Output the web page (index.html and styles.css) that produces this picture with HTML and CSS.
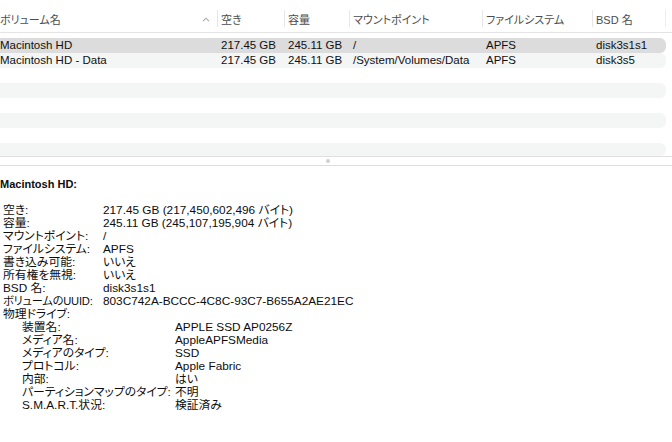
FILE: index.html
```html
<!DOCTYPE html>
<html lang="ja">
<head>
    <meta charset="UTF-8">
    <meta name="viewport" content="width=device-width, initial-scale=1.0">
    <title>ボリューム</title>
    <link rel="stylesheet" href="styles.css">
</head>
<body>
    <div class="volumes">
        <div class="thead">
            <div class="th first">ボリューム名
                <svg class="sort" width="8" height="5" viewBox="0 0 8 5"><path d="M1 4.2 L4 1.2 L7 4.2" fill="none" stroke="#a8a8a8" stroke-width="1.1"/></svg>
            </div>
            <div class="th">空き</div>
            <div class="th">容量</div>
            <div class="th">マウントポイント</div>
            <div class="th">ファイルシステム</div>
            <div class="th last">BSD 名</div>
        </div>
        <div class="tbody">
            <div class="row selected">
                <div class="td first">Macintosh HD</div>
                <div class="td">217.45 GB</div>
                <div class="td">245.11 GB</div>
                <div class="td">/</div>
                <div class="td">APFS</div>
                <div class="td">disk3s1s1</div>
            </div>
            <div class="row stripe">
                <div class="td first">Macintosh HD - Data</div>
                <div class="td">217.45 GB</div>
                <div class="td">245.11 GB</div>
                <div class="td">/System/Volumes/Data</div>
                <div class="td">APFS</div>
                <div class="td">disk3s5</div>
            </div>
            <div class="row"></div>
            <div class="row stripe"></div>
            <div class="row"></div>
            <div class="row stripe"></div>
            <div class="row"></div>
            <div class="row stripe short"></div>
        </div>
    </div>

    <div class="splitter"><span class="handle"></span></div>

    <div class="details">
        <div class="title">Macintosh HD:</div>
        <dl class="props">
            <dt>空き:</dt><dd>217.45 GB (217,450,602,496 バイト)</dd>
            <dt>容量:</dt><dd>245.11 GB (245,107,195,904 バイト)</dd>
            <dt>マウントポイント:</dt><dd>/</dd>
            <dt>ファイルシステム:</dt><dd>APFS</dd>
            <dt>書き込み可能:</dt><dd>いいえ</dd>
            <dt>所有権を無視:</dt><dd>いいえ</dd>
            <dt>BSD 名:</dt><dd>disk3s1s1</dd>
            <dt class="tight">ボリュームのUUID:</dt><dd>803C742A-BCCC-4C8C-93C7-B655A2AE21EC</dd>
        </dl>
        <div class="group">物理ドライブ:</div>
        <dl class="props nested">
            <dt>装置名:</dt><dd>APPLE SSD AP0256Z</dd>
            <dt>メディア名:</dt><dd>AppleAPFSMedia</dd>
            <dt>メディアのタイプ:</dt><dd>SSD</dd>
            <dt>プロトコル:</dt><dd>Apple Fabric</dd>
            <dt>内部:</dt><dd>はい</dd>
            <dt>パーティションマップのタイプ:</dt><dd>不明</dd>
            <dt>S.M.A.R.T.状況:</dt><dd>検証済み</dd>
        </dl>
    </div>
</body>
</html>
```

FILE: styles.css
```css
body {
    margin: 0;
    background: #ffffff;
    color: #111111;
    font-family: "Liberation Sans", "Noto Sans CJK JP", sans-serif;
    font-size: 11.5px;
    overflow: hidden;
}
.thead,
.row {
    display: grid;
    grid-template-columns: 217px 67px 65px 133px 110px 74px;
}
.thead {
    height: 24px;
    padding-top: 8px;
    border-bottom: 1px solid #e4e4e4;
    color: #4c4c4c;
    font-size: 11px;
    font-feature-settings: "palt";
}
.th {
    display: flex;
    align-items: center;
    height: 17px;
    margin-top: 2px;
    padding-left: 3px;
    border-left: 1px solid #e6e6e6;
    white-space: nowrap;
}
.th.first {
    padding-left: 0;
    border-left: none;
    justify-content: space-between;
    padding-right: 7px;
}
.th.last {
    border-right: 1px solid #ececec;
}
.sort {
    margin-top: 1px;
}
.tbody {
    padding-top: 5px;
    height: 118px;
    border-bottom: 1px solid #e0e0e0;
}
.row {
    height: 15px;
    line-height: 15px;
    width: 666px;
    border-radius: 0 6px 6px 0;
}
.row.selected {
    background: #dcdcdc;
}
.row.stripe {
    background: #f4f5f5;
}
.row.short {
    height: 13px;
}
.td {
    padding-left: 4px;
    white-space: nowrap;
}
.td.first {
    padding-left: 0;
}
.splitter {
    display: flex;
    justify-content: center;
    align-items: center;
    height: 8px;
    border-bottom: 1px solid #dedede;
}
.handle {
    width: 4px;
    height: 4px;
    margin-left: -16px;
    border-radius: 50%;
    background: #cfcfcf;
}
.details {
    padding-top: 12px;
    font-size: 11.8px;
    line-height: 13px;
    color: #0d0d0d;
    font-feature-settings: "palt";
}
.title {
    font-weight: bold;
    font-size: 11px;
    margin-bottom: 13px;
}
.props {
    display: grid;
    grid-template-columns: 100px auto;
    margin: 0;
    padding-left: 3px;
}
.props dt,
.props dd {
    margin: 0;
    white-space: nowrap;
}
.props dt.tight {
    font-size: 11.2px;
    letter-spacing: -0.2px;
}
.group {
    padding-left: 3px;
}
.props.nested {
    grid-template-columns: 153px auto;
    padding-left: 22px;
}
```
